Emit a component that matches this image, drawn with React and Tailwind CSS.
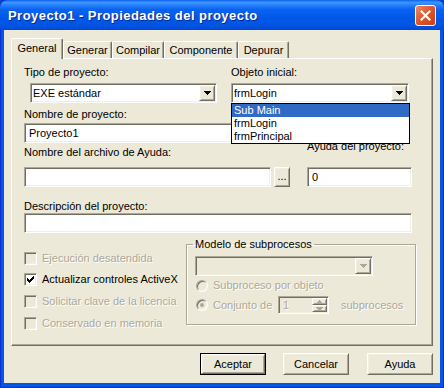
import React from "react";

const sunken =
  "border border-t-[#ACA899] border-l-[#ACA899] border-r-white border-b-white shadow-[inset_1px_1px_0_#716F64,inset_-1px_-1px_0_#F1EFE2]";
const raised =
  "border border-t-white border-l-white border-r-[#716F64] border-b-[#716F64] shadow-[inset_1px_1px_0_#F1EFE2,inset_-1px_-1px_0_#ACA899]";
const dim = "text-[#ACA899] [text-shadow:1px_1px_0_#fff]";

function Arrow({ color = "#000", up = false }) {
  const rows = up ? [3, 2, 1, 0] : [0, 1, 2, 3];
  return (
    <svg width="7" height="4" shapeRendering="crispEdges" fill={color}>
      {rows.map((r, i) => (
        <rect key={i} x={r} y={i} width={7 - r * 2} height="1" />
      ))}
    </svg>
  );
}

function Combo({ value, className = "", disabled }) {
  return (
    <div
      className={`${sunken} flex h-[20px] items-center p-px ${
        disabled ? "bg-[#ECE9D8]" : "bg-white"
      } ${className}`}
    >
      <span className="flex-1 truncate pl-[1px]">{value}</span>
      <span className={`${raised} flex h-full w-[16px] items-center justify-center bg-[#ECE9D8]`}>
        <Arrow color={disabled ? "#ACA899" : "#000"} />
      </span>
    </div>
  );
}

function Field({ value, className = "" }) {
  return (
    <div className={`${sunken} flex h-[20px] items-center bg-white pl-[4px] ${className}`}>
      {value}
    </div>
  );
}

function Check({ label, checked, disabled }) {
  return (
    <div className="flex h-[13px] items-center">
      <span
        className={`${sunken} flex h-[13px] w-[13px] items-center justify-center ${
          disabled ? "bg-[#ECE9D8]" : "bg-white"
        }`}
      >
        {checked && (
          <svg width="7" height="7" shapeRendering="crispEdges" fill="#000">
            <rect x="6" y="0" width="1" height="1" />
            <rect x="5" y="1" width="2" height="1" />
            <rect x="0" y="2" width="1" height="1" />
            <rect x="4" y="2" width="3" height="1" />
            <rect x="0" y="3" width="2" height="1" />
            <rect x="3" y="3" width="3" height="1" />
            <rect x="0" y="4" width="5" height="1" />
            <rect x="1" y="5" width="3" height="1" />
            <rect x="2" y="6" width="1" height="1" />
          </svg>
        )}
      </span>
      <span className={`ml-[5px] whitespace-nowrap ${disabled ? dim : ""}`}>{label}</span>
    </div>
  );
}

function Radio({ checked }) {
  return (
    <span
      className={`${sunken} flex h-[12px] w-[12px] shrink-0 items-center justify-center rounded-full bg-[#ECE9D8]`}
    >
      {checked && <span className="h-[4px] w-[4px] rounded-full bg-[#ACA899]" />}
    </span>
  );
}

function Button({ children, isDefault, className = "" }) {
  return (
    <div className={`h-[22px] w-[66px] ${isDefault ? "border border-black" : ""} ${className}`}>
      <div className={`${raised} flex h-full w-full items-center justify-center bg-[#ECE9D8]`}>
        {children}
      </div>
    </div>
  );
}

const tabs = [
  { label: "General", w: "w-[52px]", active: true },
  { label: "Generar", w: "w-[49px]" },
  { label: "Compilar", w: "w-[52px]" },
  { label: "Componente", w: "w-[74px]" },
  { label: "Depurar", w: "w-[51px]" },
];

export default function App() {
  return (
    <div className="h-[388px] w-[444px] bg-[#0A3BC4] font-['Liberation_Sans',Arial,sans-serif] text-[11px] leading-[13px] text-black">
      <div className="flex h-full flex-col rounded-t-[8px] bg-[#0855DD] shadow-[inset_1px_0_0_#0831D9,inset_-1px_0_0_#0831D9,inset_0_-1px_0_#0831D9]">
        {/* title bar */}
        <div className="flex h-[30px] shrink-0 items-center justify-between rounded-t-[8px] bg-[linear-gradient(to_bottom,#0A5FEE_0%,#3D95FF_8%,#2A82FA_16%,#0A63F0_32%,#0058E8_60%,#0055E3_85%,#0046D6_100%)] pl-[8px] pr-[8px]">
          <span className="text-[13px] font-bold tracking-[0.45px] text-white [text-shadow:1px_1px_0_#0A2A8C]">
            Proyecto1 - Propiedades del proyecto
          </span>
          <span className="flex h-[21px] w-[21px] items-center justify-center rounded-[3px] border border-white bg-[linear-gradient(135deg,#F08A66_0%,#E0582E_45%,#C8401A_100%)]">
            <svg width="11" height="11" viewBox="0 0 11 11">
              <path d="M1.5 1.5l8 8M9.5 1.5l-8 8" stroke="#fff" strokeWidth="2.2" strokeLinecap="square" />
            </svg>
          </span>
        </div>

        <div className="flex flex-1 flex-col px-[4px] pb-[5px]">
          <div className="flex flex-1 flex-col bg-[#ECE9D8] px-[7px] pb-[8px] pt-[8px]">
            {/* tabs */}
            <div className="relative z-10 -mb-px flex h-[21px] items-start">
              {tabs.map((t) => (
                <div
                  key={t.label}
                  className={`flex items-center justify-center rounded-t-[2px] border-l border-t border-r border-l-white border-t-white border-r-[#716F64] bg-[#ECE9D8] shadow-[inset_-1px_0_0_#ACA899] ${
                    t.w
                  } ${t.active ? "h-[21px] pb-[1px]" : "mt-[3px] h-[17px]"}`}
                >
                  {t.label}
                </div>
              ))}
            </div>

            {/* panel */}
            <div className="flex flex-1 flex-col border border-l-white border-t-white border-r-[#716F64] border-b-[#716F64] pl-[12px] pt-[7px] shadow-[inset_-1px_-1px_0_#ACA899]">
              <div className="flex">
                <div className="w-[207px]">
                  <div>Tipo de proyecto:</div>
                  <Combo className="ml-[6px] mt-[4px] w-[187px]" value="EXE estándar" />
                </div>
                <div>
                  <div>Objeto inicial:</div>
                  <div className="relative mt-[4px]">
                    <Combo className="w-[178px]" value="frmLogin" />
                    <ul className="absolute left-0 top-full z-20 w-[179px] border border-black bg-white">
                      <li className="bg-[#316AC5] pl-[2px] text-white">Sub Main</li>
                      <li className="pl-[2px]">frmLogin</li>
                      <li className="pl-[2px]">frmPrincipal</li>
                    </ul>
                  </div>
                </div>
              </div>

              <div className="flex">
                <div className="w-[283px]">
                  <div className="mt-[5px]">Nombre de proyecto:</div>
                  <Field className="mt-[2px] w-[266px]" value="Proyecto1" />
                  <div className="mt-[3px]">Nombre del archivo de Ayuda:</div>
                  <div className="mt-[8px] flex">
                    <Field className="w-[247px]" />
                    <div className={`${raised} ml-[3px] flex h-[20px] w-[16px] items-end justify-center bg-[#ECE9D8] pb-[3px]`}>
                      ...
                    </div>
                  </div>
                </div>
                <div>
                  <div className="mt-[24px]">
                    Id. de contexto de
                    <br />
                    Ayuda del proyecto:
                  </div>
                  <Field className="mt-[14px] w-[105px]" value="0" />
                </div>
              </div>

              <div className="mt-[13px]">Descripción del proyecto:</div>
              <Field className="w-[388px]" />

              <div className="flex items-start">
                <div className="mt-[19px] w-[162px]">
                  <Check label="Ejecución desatendida" disabled />
                  <div className="mt-[8px]">
                    <Check label="Actualizar controles ActiveX" checked />
                  </div>
                  <div className="mt-[9px]">
                    <Check label="Solicitar clave de la licencia" disabled />
                  </div>
                  <div className="mt-[9px]">
                    <Check label="Conservado en memoria" disabled />
                  </div>
                </div>

                <fieldset className="mt-[5px] w-[230px] border border-[#ACA899] pb-[10px] pl-[6px] shadow-[1px_1px_0_#fff,inset_1px_1px_0_#fff]">
                  <legend className="px-[2px] leading-[13px]">Modelo de subprocesos</legend>
                  <Combo className="ml-[2px] mt-[5px] w-[178px]" disabled />
                  <div className="ml-[3px] mt-[3px] flex h-[13px] items-center">
                    <Radio />
                    <span className={`ml-[5px] ${dim}`}>Subproceso por objeto</span>
                  </div>
                  <div className="ml-[3px] mt-[4px] flex h-[18px] items-center">
                    <Radio checked />
                    <span className={`ml-[5px] w-[65px] ${dim}`}>Conjunto de</span>
                    <div className={`${sunken} flex h-[18px] w-[51px] items-center bg-[#ECE9D8] p-px`}>
                      <span className={`flex-1 pl-[3px] ${dim}`}>1</span>
                      <div className="flex h-full w-[15px] flex-col">
                        <span className={`${raised} flex flex-1 items-center justify-center bg-[#ECE9D8]`}>
                          <Arrow color="#ACA899" up />
                        </span>
                        <span className={`${raised} flex flex-1 items-center justify-center bg-[#ECE9D8]`}>
                          <Arrow color="#ACA899" />
                        </span>
                      </div>
                    </div>
                    <span className={`ml-[12px] ${dim}`}>subprocesos</span>
                  </div>
                </fieldset>
              </div>
            </div>

            {/* buttons */}
            <div className="mt-[7px] flex justify-end">
              <Button isDefault>Aceptar</Button>
              <Button className="ml-[17px]">Cancelar</Button>
              <Button className="ml-[18px]">Ayuda</Button>
            </div>
          </div>
        </div>
      </div>
    </div>
  );
}
